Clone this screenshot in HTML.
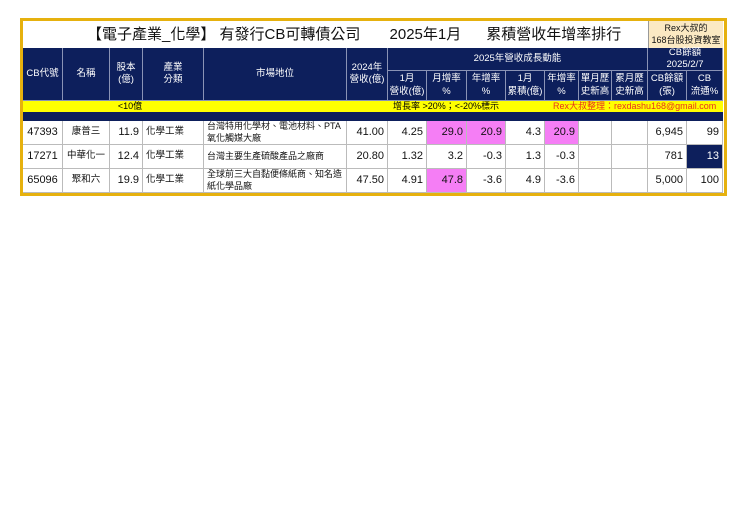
<!DOCTYPE html>
<html><head><meta charset="utf-8"><style>
*{margin:0;padding:0;box-sizing:border-box}
body{width:740px;height:523px;background:#fff;position:relative;font-family:"Liberation Sans","Noto Sans CJK TC",sans-serif;overflow:hidden}
.box{position:absolute;left:20px;top:18px;width:707px;height:178px;border:3px solid #e6b10e;background:#fff}
.c{position:absolute;display:flex;align-items:center;justify-content:center;text-align:center;font-size:9.5px;line-height:1.3}
.h{background:#0d1f5c;color:#fff;border-right:1px solid #8a93b5;border-bottom:1px solid #8a93b5}
.d{border-right:1px solid #bbb;border-bottom:1px solid #bbb;color:#111;font-size:11px}
.r{justify-content:flex-end;padding-right:3px}
.l{justify-content:flex-start;padding-left:3px;text-align:left}
.y{font-size:9px;white-space:nowrap}
</style></head><body>
<div class="box"></div>
<div class="c" style="left:23px;top:21px;width:625px;height:27px;font-size:15px;justify-content:flex-start;padding-left:64px;color:#111;white-space:pre">【電子產業_化學】 有發行CB可轉債公司       2025年1月      累積營收年增率排行</div>
<div class="c" style="left:648px;top:21px;width:75px;height:27px;background:#fbe9c3;color:#111;font-size:9px;border-left:1px solid #999">Rex大叔的<br>168台股投資教室</div>
<div class="c h" style="left:23px;top:48px;width:40px;height:53px">CB代號</div>
<div class="c h" style="left:63px;top:48px;width:47px;height:53px">名稱</div>
<div class="c h" style="left:110px;top:48px;width:33px;height:53px">股本<br>(億)</div>
<div class="c h" style="left:143px;top:48px;width:61px;height:53px">產業<br>分類</div>
<div class="c h" style="left:204px;top:48px;width:143px;height:53px">市場地位</div>
<div class="c h" style="left:347px;top:48px;width:41px;height:53px">2024年<br>營收(億)</div>
<div class="c h" style="left:388px;top:48px;width:260px;height:23px">2025年營收成長動能</div>
<div class="c h" style="left:648px;top:48px;width:75px;height:23px">CB餘額<br>2025/2/7</div>
<div class="c h" style="left:388px;top:71px;width:39px;height:30px">1月<br>營收(億)</div>
<div class="c h" style="left:427px;top:71px;width:40px;height:30px">月增率<br>%</div>
<div class="c h" style="left:467px;top:71px;width:39px;height:30px">年增率<br>%</div>
<div class="c h" style="left:506px;top:71px;width:39px;height:30px">1月<br>累積(億)</div>
<div class="c h" style="left:545px;top:71px;width:34px;height:30px">年增率<br>%</div>
<div class="c h" style="left:579px;top:71px;width:33px;height:30px">單月歷<br>史新高</div>
<div class="c h" style="left:612px;top:71px;width:36px;height:30px">累月歷<br>史新高</div>
<div class="c h" style="left:648px;top:71px;width:39px;height:30px">CB餘額<br>(張)</div>
<div class="c h" style="left:687px;top:71px;width:36px;height:30px">CB<br>流通%</div>
<div class="c" style="left:23px;top:101px;width:700px;height:11px;background:#ffff00"></div>
<div class="c y" style="left:110px;top:101px;width:40px;height:11px">&lt;10億</div>
<div class="c y" style="left:393px;top:101px;width:130px;height:11px;justify-content:flex-start">增長率 &gt;20%；&lt;-20%標示</div>
<div class="c y" style="left:553px;top:101px;width:172px;height:11px;color:#e8321c;justify-content:flex-start">Rex大叔整理：rexdashu168@gmail.com</div>
<div class="c" style="left:23px;top:112px;width:700px;height:9px;background:#0d1f5c"></div>
<div id="rows"></div>
<script>
var cols=[[23,40],[63,47],[110,33],[143,61],[204,143],[347,41],[388,39],[427,40],[467,39],[506,39],[545,34],[579,33],[612,36],[648,39],[687,36]];
var data=[
["47393","康普三","11.9","化學工業","台灣特用化學材、電池材料、PTA氧化觸媒大廠","41.00","4.25","29.0","20.9","4.3","20.9","","","6,945","99"],
["17271","中華化一","12.4","化學工業","台灣主要生產硫酸產品之廠商","20.80","1.32","3.2","-0.3","1.3","-0.3","","","781","13"],
["65096","聚和六","19.9","化學工業","全球前三大自黏便條紙商、知名造紙化學品廠","47.50","4.91","47.8","-3.6","4.9","-3.6","","","5,000","100"]];
var pink=[[7,8,10],[],[7]];
var tops=[121,145,169],h=24,out="";
data.forEach(function(row,i){row.forEach(function(v,j){
 var cls="c d";
 if(j==3||j==4)cls+=" l";else if(j>1)cls+=" r";
 var st="left:"+cols[j][0]+"px;top:"+tops[i]+"px;width:"+cols[j][1]+"px;height:"+h+"px;";
 if(pink[i].indexOf(j)>=0)st+="background:#f57ef5;";
 if(i==1&&j==14)st+="background:#0d1f5c;color:#fff;";
 if(j==1||j==3)st+="font-size:9.5px;";
 if(j==4)st+="font-size:9px;";
 out+='<div class="'+cls+'" style="'+st+'">'+v+'</div>';});});
document.getElementById("rows").innerHTML=out;
</script>
</body></html>
